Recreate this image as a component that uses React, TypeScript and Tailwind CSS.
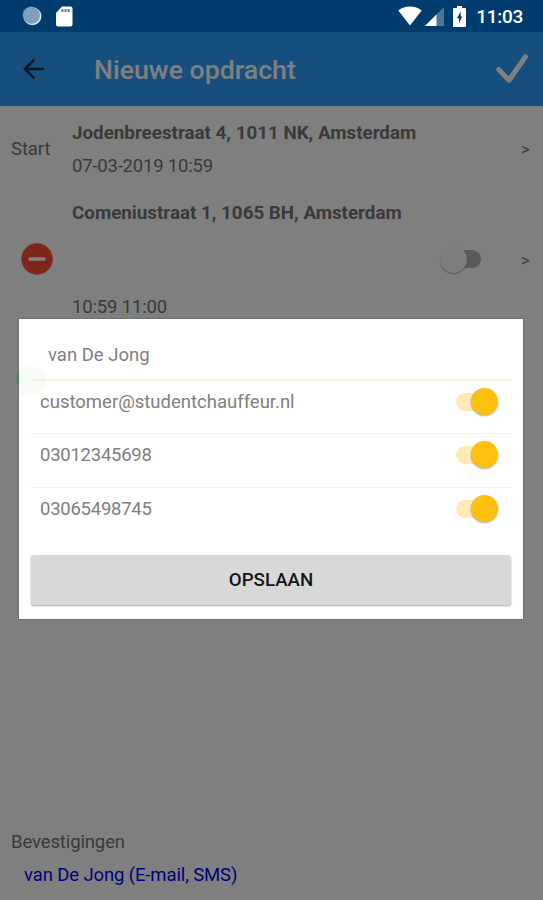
import clsx from 'clsx'
import React, { useState } from 'react'

const contacts = [
  { id: 1, value: 'customer@studentchauffeur.nl' },
  { id: 2, value: '03012345698' },
  { id: 3, value: '03065498745' },
]

function StatusBar() {
  return (
    <div className="flex h-8 shrink-0 items-center bg-[#003d6e] pl-[22px] pr-5 text-white">
      <svg width="20" height="20" viewBox="0 0 20 20">
        <circle cx="10.400" cy="10.200" r="9" fill="#d5e3ee" />
        <circle cx="9.400" cy="9.200" r="8.600" fill="#7f9fbb" />
      </svg>
      <svg className="ml-3.5" width="17" height="21" viewBox="0 0 17 21">
        <path d="M6 .5h8.500a2 2 0 0 1 2 2v16a2 2 0 0 1-2 2H2a2 2 0 0 1-2-2V7z" fill="#fff" />
        <path d="M6.500 3v3M9.500 3v3M12.500 3v3" stroke="#5b7d9c" strokeWidth="2" />
      </svg>
      <svg className="ml-auto" width="24" height="20" viewBox="0 0 24 20">
        <path d="M12 19.500.3 4.500C3.500 1.900 7.500.5 12 .5s8.500 1.400 11.700 4z" fill="#fff" />
      </svg>
      <svg className="ml-[3px]" width="19" height="19" viewBox="0 0 19 19">
        <path d="M0 19 19 0v19z" fill="#4d7799" />
        <path d="M0 19 11.500 7.500V19z" fill="#fff" />
      </svg>
      <svg className="ml-[9px]" width="13" height="21" viewBox="0 0 13 21">
        <path d="M4 0h5v2h3a1 1 0 0 1 1 1v17a1 1 0 0 1-1 1H1a1 1 0 0 1-1-1V3a1 1 0 0 1 1-1h3z" fill="#fff" />
        <path d="M7.700 5.500 4 12.200h2v4.800L9.300 10.500H7.700z" fill="#003d6e" />
      </svg>
      <span className="ml-2.5 pt-px text-[19px] font-medium leading-none tracking-[-0.3px]">11:03</span>
    </div>
  )
}

function Toolbar() {
  return (
    <header className="flex h-[74px] shrink-0 items-center bg-[#2c9dfc] pl-[23px] pr-[14px]">
      <svg width="22" height="22" viewBox="0 0 22 22" fill="none" stroke="#16324b" strokeWidth="2.500">
        <path d="M21 11H2M11.500 1.300 1.800 11l9.700 9.700" />
      </svg>
      <h1 className="ml-[49px] pt-[3px] text-[26.700px] font-medium leading-none text-white">Nieuwe opdracht</h1>
      <svg className="ml-auto" width="33" height="31" viewBox="0 0 33 31" fill="none" stroke="#fff" strokeWidth="5" strokeLinecap="round" strokeLinejoin="round">
        <path d="M2.700 15.500 13 26.300 29.500 2.700" />
      </svg>
    </header>
  )
}

function Switch({ checked, onChange }: { checked: boolean, onChange?: () => void }) {
  return (
    <button
      type="button"
      role="switch"
      aria-checked={checked}
      onClick={onChange}
      className={clsx('flex h-[27px] w-[42px] items-center', checked ? 'justify-end' : 'justify-start')}
    >
      <span
        className={clsx(
          'flex h-[18px] items-center rounded-full',
          checked ? 'w-[42px] justify-end bg-[#feeab5]' : 'ml-[5px] w-[37px] justify-start bg-[#b2b2b2]',
        )}
      >
        <span
          className={clsx(
            'size-[27px] shrink-0 rounded-full',
            checked
              ? 'bg-[#fbc010] shadow-[0_1px_2px_rgba(0,0,0,0.35)]'
              : '-ml-1 bg-[#fafafa] shadow-[0_1px_1px_rgba(0,0,0,0.35)]',
          )}
        />
      </span>
    </button>
  )
}

function RideList() {
  return (
    <main className="flex flex-1 flex-col bg-white text-[18.500px] leading-[22px] text-[#747474]">
      <section className="flex h-[87px] items-center">
        <div className="w-[72px] pb-0.5 pl-[11px] tracking-[-0.1px]">Start</div>
        <div className="flex flex-1 flex-col gap-[11px]">
          <div className="text-[18.800px] font-bold">Jodenbreestraat 4, 1011 NK, Amsterdam</div>
          <div className="tracking-[-0.2px]">07-03-2019 10:59</div>
        </div>
        <div className="w-[22px] pb-0.5 text-[17px]">&gt;</div>
      </section>
      <section className="flex h-[132px] items-center">
        <div className="w-[72px] pl-[21px]">
          <svg width="32" height="32" viewBox="0 0 32 32">
            <circle cx="16" cy="16" r="15.700" fill="#fc4c34" />
            <rect x="7.500" y="14.200" width="17" height="3.600" rx="1" fill="#fff" />
          </svg>
        </div>
        <div className="flex flex-1 flex-col gap-[72px] pt-0.5">
          <div className="text-[18.800px] font-bold">Comeniustraat 1, 1065 BH, Amsterdam</div>
          <div className="tracking-[-0.15px]">10:59 11:00</div>
        </div>
        <div className="-ml-20 mr-[40px]"><Switch checked={false} /></div>
        <div className="w-[22px] pt-0.5 text-[17px]">&gt;</div>
      </section>
      <footer className="mt-auto pb-3.5 pl-[11px] tracking-[-0.12px]">
        <div>Bevestigingen</div>
        <div className="pl-[13px] pt-[11px] text-[#0000ff]">van De Jong (E-mail, SMS)</div>
      </footer>
    </main>
  )
}

function ContactDialog() {
  const [enabled, setEnabled] = useState([1, 2, 3])

  const toggle = (id: number) => {
    setEnabled(v => v.includes(id) ? v.filter(i => i !== id) : [...v, id])
  }

  return (
    <div className="absolute inset-x-0 bottom-0 top-8 flex items-start bg-black/50 pl-[19px] pr-5 pt-[287px]">
      <div className="h-[300px] w-full bg-white px-3 text-[18.500px] leading-[22px] text-[#808080] shadow-[0_0_2px_rgba(0,0,0,0.3)]">
        <div className="relative flex h-[62px] items-center border-b-2 border-[#fef3dc] pl-[17px] pt-3">
          <span>van De Jong</span>
          <span className="absolute -bottom-4 -left-3 size-7 rounded-r-full bg-[#4caf50]/5" />
          <span className="absolute -bottom-[5px] -left-[14px] h-2.5 w-0.5 rounded-l-full bg-[#3f7f55]" />
        </div>
        {contacts.map((item, index) => (
          <div
            key={item.id}
            className={clsx(
              'flex justify-between pl-[9px] pr-[13px] pt-[7px]',
              index === 0 ? 'h-[53px]' : 'h-[54px]',
              index < 2 && 'border-b border-[#f3f3f3]',
            )}
          >
            <span className={clsx('pt-[3px]', index > 0 && 'tracking-[-0.25px]')}>{item.value}</span>
            <Switch checked={enabled.includes(item.id)} onChange={() => toggle(item.id)} />
          </div>
        ))}
        <button
          type="button"
          className="mt-[13px] h-[50px] w-full rounded-[3px] bg-[#d8d8d8] text-[18.700px] font-medium text-[#161616] shadow-[0_1px_2px_rgba(0,0,0,0.35)]"
        >
          OPSLAAN
        </button>
      </div>
    </div>
  )
}

function App() {
  return (
    <div className="relative flex h-screen w-full flex-col overflow-hidden font-['Roboto',sans-serif]">
      <StatusBar />
      <Toolbar />
      <RideList />
      <ContactDialog />
    </div>
  )
}

export default App
